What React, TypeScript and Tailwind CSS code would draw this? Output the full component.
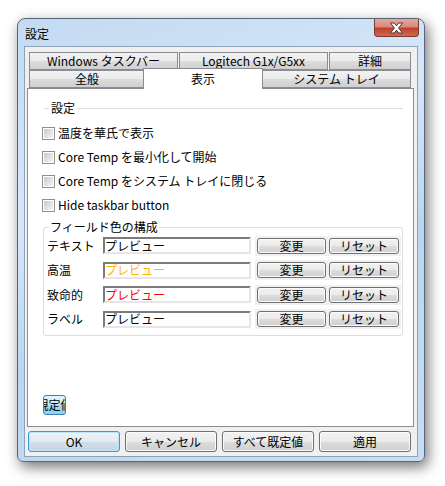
import type { ReactNode } from 'react';

const btnGray =
    "bg-[linear-gradient(to_bottom,#f2f2f2_0%,#ebebeb_50%,#dddddd_50%,#cfcfcf_100%)] border border-[#707070] shadow-[inset_0_0_0_1px_#fbfbfb]";

function WinButton({ children, className = '' }: { children: ReactNode; className?: string }) {
    return (
        <button className={`flex items-center justify-center rounded-[3px] text-[12px] leading-none text-black ${btnGray} ${className}`}>
            {children}
        </button>
    );
}

function Tab({ label, className = '' }: { label: string; className?: string }) {
    return (
        <div
            className={`flex h-[18px] items-center justify-center border border-[#898c95] bg-[linear-gradient(to_bottom,#f2f2f2_0%,#ebebeb_50%,#dddddd_50%,#cfcfcf_100%)] text-[12px] leading-none text-black ${className}`}
        >
            {label}
        </div>
    );
}

function Checkbox({ label }: { label: string }) {
    return (
        <div className="flex h-[24px] items-center gap-[3px]">
            <div className="h-[13px] w-[13px] border border-[#8e8f8f] bg-white p-[1px]">
                <div className="h-full w-full bg-gradient-to-br from-[#c9ccd1] to-[#f4f4f4]" />
            </div>
            <span className="text-[12px] leading-none text-black">{label}</span>
        </div>
    );
}

const colorRows = [
    { label: 'テキスト', color: 'text-black' },
    { label: '高温', color: 'text-[#ffb400]' },
    { label: '致命的', color: 'text-[#ff0000]' },
    { label: 'ラベル', color: 'text-black' },
];

export default function App() {
    return (
        <div className="h-[486px] w-[445px] bg-white pl-[17px] pt-[18px] font-['Noto_Sans_CJK_JP',sans-serif]">
            {/* window */}
            <div className="flex h-[444px] w-[408px] flex-col rounded-t-[8px] rounded-b-[6px] border border-[#55667a] bg-[linear-gradient(160deg,#c3daf1_0%,#d6e7f8_35%,#bcd5ee_60%,#c9ddf2_100%)] px-[6px] pb-[4px] shadow-[3px_5px_14px_rgba(0,0,0,0.55)]">
                {/* title bar */}
                <div className="-mr-[1px] flex h-[27px] items-start justify-between">
                    <span className="pl-[1px] pt-[9px] text-[12px] leading-none text-black">設定</span>
                    <div className="flex h-[18px] w-[45px] items-center justify-center rounded-b-[4px] border border-t-0 border-[#7a3a30] bg-[linear-gradient(to_bottom,#e3a89d_0%,#d88b7c_45%,#c2412c_55%,#cf6a4e_100%)]">
                        <svg width="15" height="12" viewBox="0 0 15 12">
                            <path
                                d="M1.5 1 L5.2 1 L7.5 3.8 L9.8 1 L13.5 1 L9.6 6 L13.5 11 L9.8 11 L7.5 8.2 L5.2 11 L1.5 11 L5.4 6 Z"
                                fill="#ffffff"
                                stroke="#4a3a3a"
                                strokeWidth="1"
                                strokeLinejoin="round"
                            />
                        </svg>
                    </div>
                </div>

                {/* client area */}
                <div className="flex flex-1 flex-col border border-[#8ea3ba] bg-[#f0f0f0] pb-[4px] pl-[2px] pr-[3px] pt-[5px]">
                    {/* tabs */}
                    <div className="flex gap-[1px] pl-[2px]">
                        <Tab label="Windows タスクバー" className="w-[149px]" />
                        <Tab label="Logitech G1x/G5xx" className="w-[149px]" />
                        <Tab label="詳細" className="w-[82px]" />
                    </div>
                    <div className="relative z-10 flex pl-[2px]">
                        <Tab label="全般" className="w-[116px]" />
                        <div className="-mb-[1px] -ml-[2px] -mr-[1px] -mt-[2px] flex h-[21px] w-[120px] items-center justify-center border border-b-0 border-[#898c95] bg-white text-[12px] leading-none text-black">
                            表示
                        </div>
                        <Tab label="システム トレイ" className="w-[149px]" />
                    </div>

                    {/* panel */}
                    <div className="flex flex-1 flex-col border border-[#898c95] bg-white pl-[14px] pr-[10px]">
                        <div className="ml-[2px] mt-[11px] flex h-[16px] items-center gap-[2px]">
                            <div className="h-[1px] w-[5px] bg-[#d5dfe5]" />
                            <span className="text-[12px] leading-none text-black">設定</span>
                            <div className="h-[1px] flex-1 bg-[#d5dfe5]" />
                        </div>

                        <div className="mt-[5px] flex flex-col">
                            <Checkbox label="温度を華氏で表示" />
                            <Checkbox label="Core Temp を最小化して開始" />
                            <Checkbox label="Core Temp をシステム トレイに閉じる" />
                            <Checkbox label="Hide taskbar button" />
                        </div>

                        {/* field colours */}
                        <div className="relative ml-[1px] mt-[10px] flex flex-col gap-[7.5px] rounded-[3px] border border-[#d5dfe5] pb-[7.5px] pl-[3px] pt-[9px]">
                            <span className="absolute -top-[7px] left-[5px] bg-white px-[1px] text-[12px] leading-none text-black">
                                フィールド色の構成
                            </span>
                            {colorRows.map((r) => (
                                <div key={r.label} className="flex h-[17px] items-center">
                                    <span className="w-[56px] text-[12px] leading-none text-black">{r.label}</span>
                                    <div className={`flex h-[17px] w-[148px] items-center border-2 border-b-[#e6e6e6] border-l-[#7b7b7b] border-r-[#e6e6e6] border-t-[#7b7b7b] bg-white text-[12px] leading-none ${r.color}`}>
                                        プレビュー
                                    </div>
                                    <div className="ml-[4px] flex gap-[3px] bg-[#f0f0f0] p-[2px]">
                                        <WinButton className="h-[16px] w-[69px]">変更</WinButton>
                                        <WinButton className="h-[16px] w-[70px]">リセット</WinButton>
                                    </div>
                                </div>
                            ))}
                        </div>

                        <button className="ml-[1px] mt-[59px] flex h-[20px] w-[23px] items-center justify-center overflow-hidden rounded-[3px] border border-[#3c7fb1] bg-[linear-gradient(to_bottom,#e4f6fe_0%,#bfe8fc_50%,#9cdaf8_50%,#8fd2f4_100%)] text-[12px] leading-none text-black">
                            <span className="shrink-0 whitespace-nowrap">規定値</span>
                        </button>
                    </div>

                    {/* dialog buttons */}
                    <div className="mt-[4px] flex gap-[5px] pl-[1px]">
                        <button className="flex h-[21px] w-[92px] items-center justify-center rounded-[3px] border border-[#3a9ad8] bg-[linear-gradient(to_bottom,#eef4f8_0%,#e1eaf0_50%,#d2dfe8_50%,#c6d6e2_100%)] text-[12px] leading-none text-black shadow-[inset_0_0_0_1px_#bfe6f8]">
                            OK
                        </button>
                        <WinButton className="h-[21px] w-[92px]">キャンセル</WinButton>
                        <WinButton className="h-[21px] w-[92px]">すべて既定値</WinButton>
                        <WinButton className="h-[21px] w-[92px]">適用</WinButton>
                    </div>
                </div>
            </div>
        </div>
    );
}
